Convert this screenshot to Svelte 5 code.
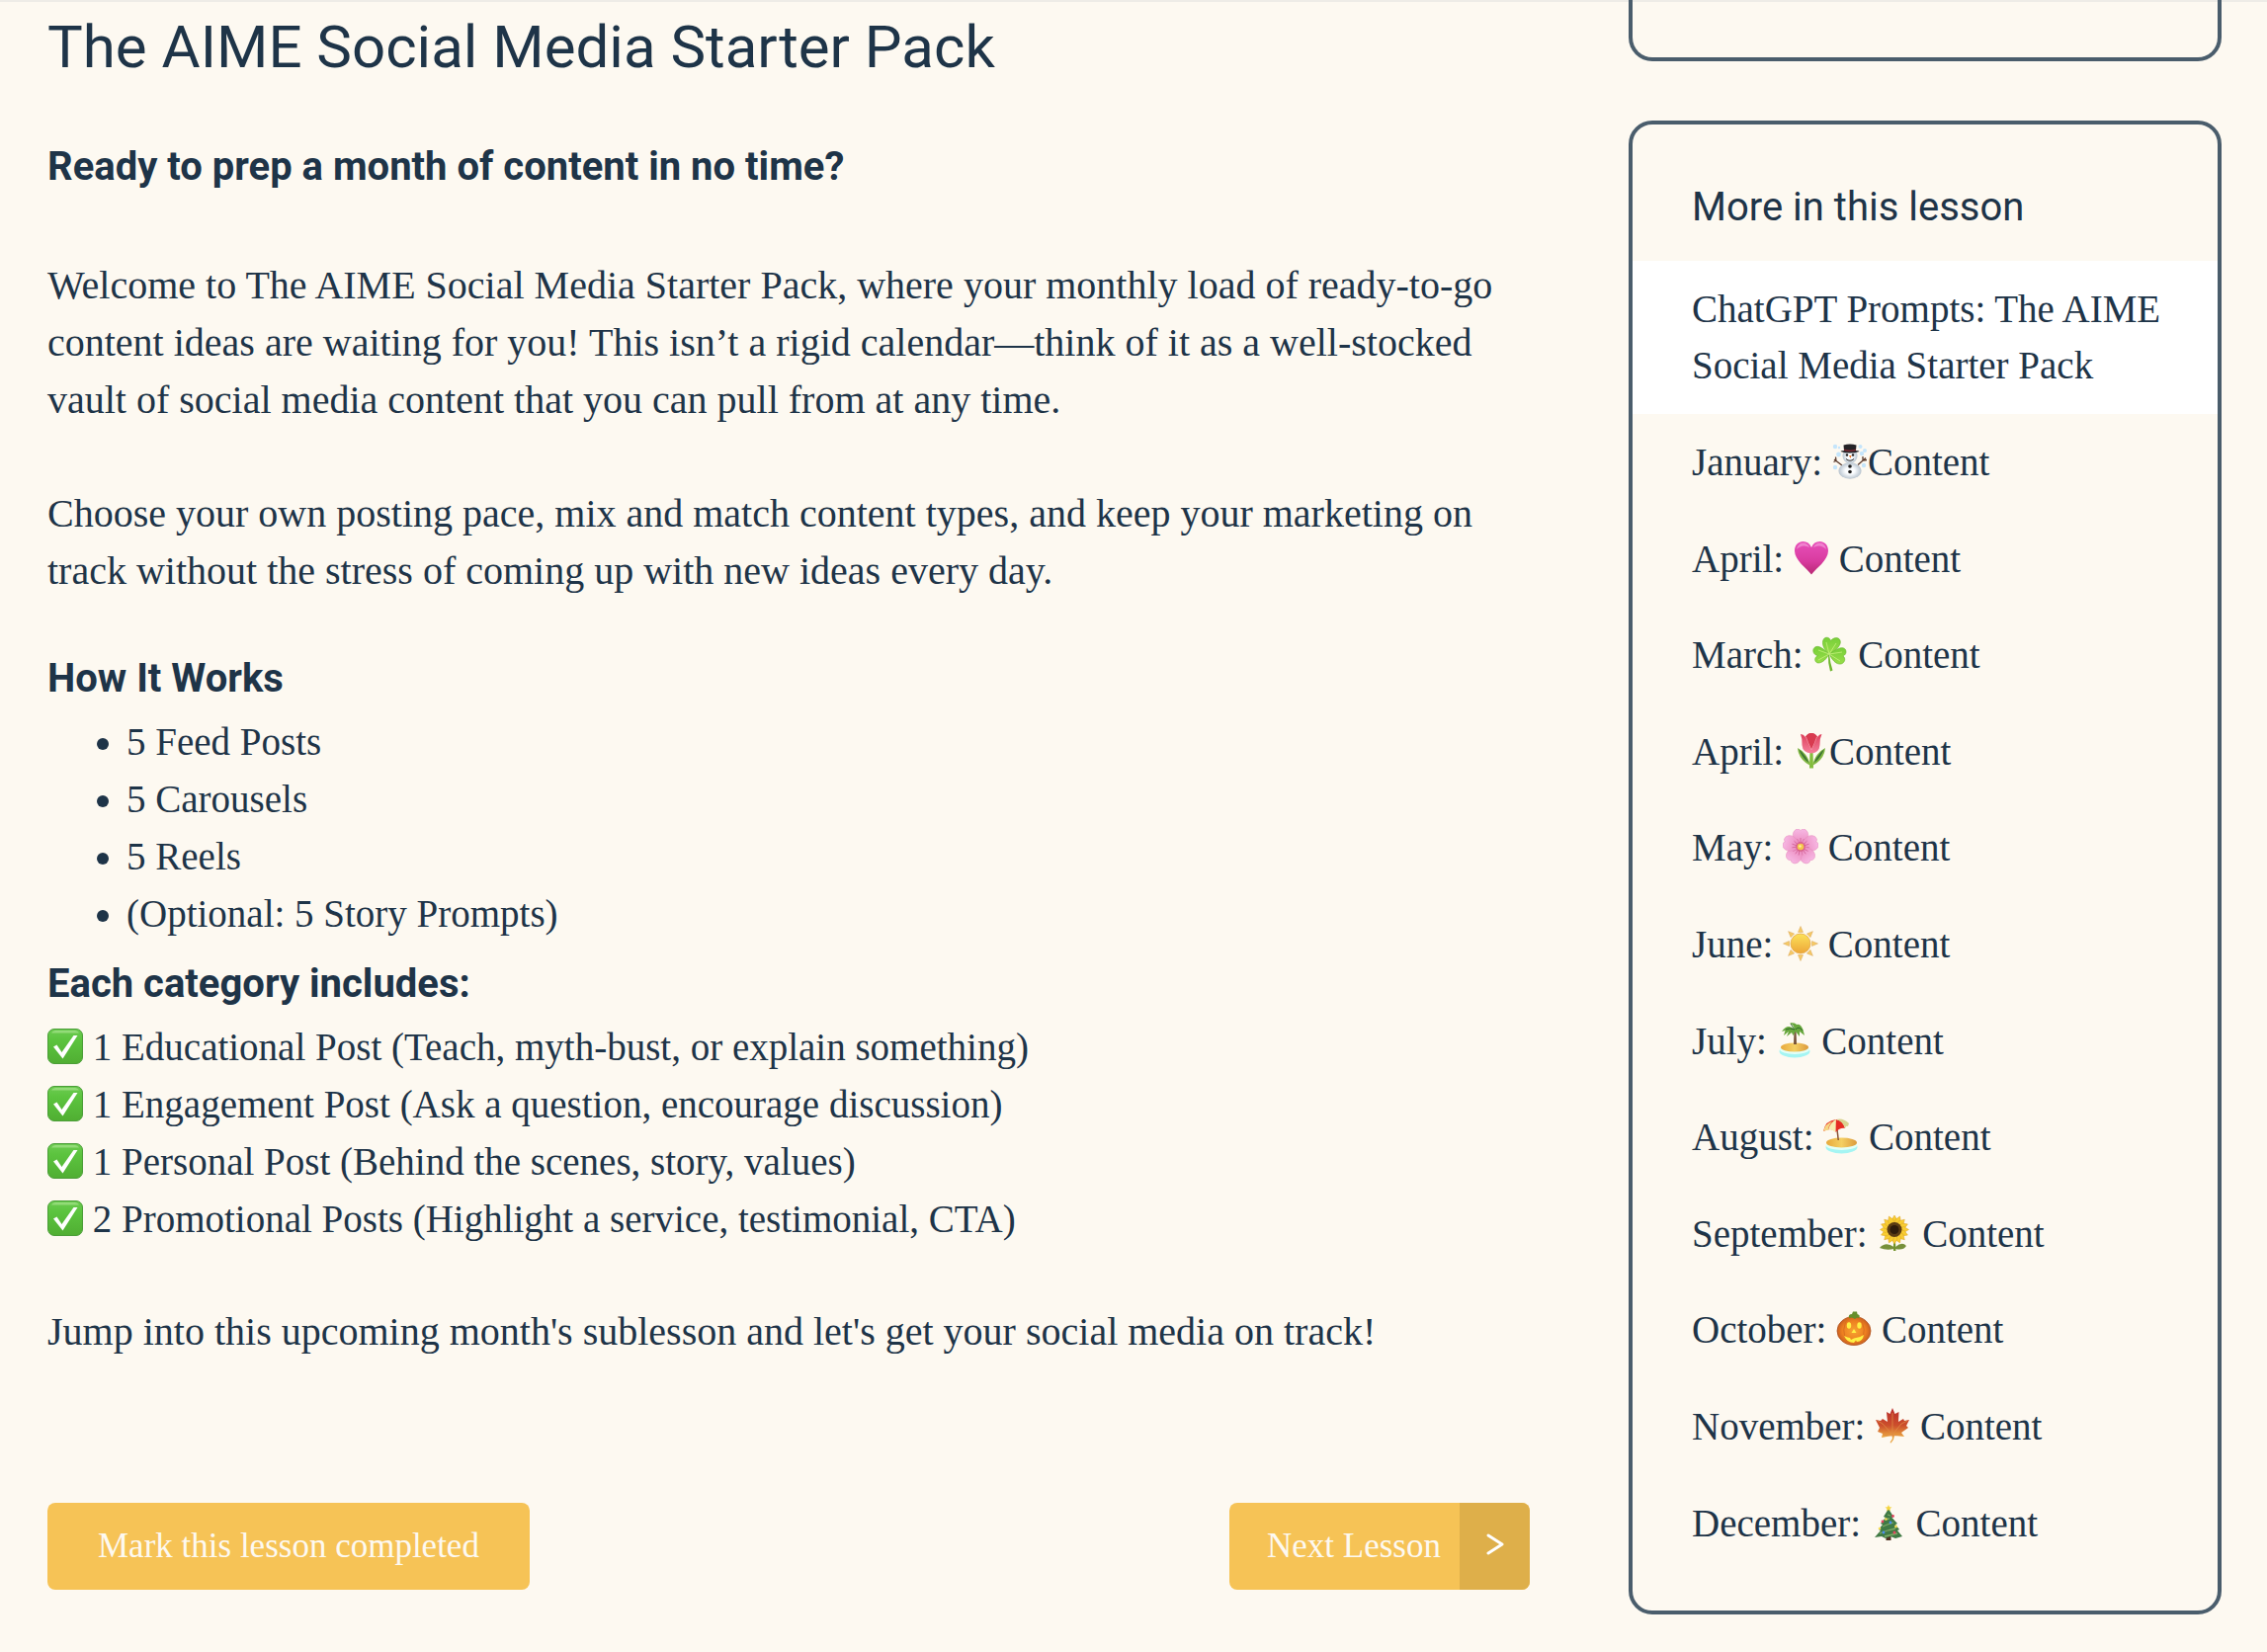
<script lang="ts">
	type Lesson = {
		month: string;
		icon: string;
		tight?: boolean;
	};

	const included = [
		'1 Educational Post (Teach, myth-bust, or explain something)',
		'1 Engagement Post (Ask a question, encourage discussion)',
		'1 Personal Post (Behind the scenes, story, values)',
		'2 Promotional Posts (Highlight a service, testimonial, CTA)'
	];

	const formats = ['5 Feed Posts', '5 Carousels', '5 Reels', '(Optional: 5 Story Prompts)'];

	const lessons: Lesson[] = [
		{ month: 'January', icon: 'snowman', tight: true },
		{ month: 'April', icon: 'heart' },
		{ month: 'March', icon: 'shamrock' },
		{ month: 'April', icon: 'tulip', tight: true },
		{ month: 'May', icon: 'blossom' },
		{ month: 'June', icon: 'sun' },
		{ month: 'July', icon: 'island' },
		{ month: 'August', icon: 'beach' },
		{ month: 'September', icon: 'sunflower' },
		{ month: 'October', icon: 'pumpkin' },
		{ month: 'November', icon: 'maple' },
		{ month: 'December', icon: 'tree' }
	];

	function spokes(count: number) {
		return Array.from({ length: count }, (_, i) => (i * 360) / count);
	}
</script>

<svelte:head>
	<title>The AIME Social Media Starter Pack</title>
</svelte:head>

{#snippet emoji(name: string)}
	<svg class="emoji" viewBox="0 0 36 36" role="img" aria-label={name}>
		{#if name === 'check'}
			<rect x="0.5" y="0.5" width="35" height="35" rx="6.5" fill="url(#green)" stroke="#4b9d38" />
			<path d="M4 4.5Q5 2 8 2H28Q31 2 32 4.5Z" fill="#a5e38c" opacity="0.7" />
			<path d="M6 18.5L9.5 16.5L14.5 24L26.5 7H30.5L15.5 30.5Z" fill="#fff" />
		{:else if name === 'snowman'}
			<g fill="#c5e5fb">
				<circle cx="3" cy="3" r="2.2" /><circle cx="28.5" cy="3" r="2" /><circle cx="33" cy="7" r="2" />
				<circle cx="6.5" cy="11" r="2.4" /><circle cx="30" cy="10" r="2.2" />
				<circle cx="3" cy="24" r="2.2" /><circle cx="32" cy="22" r="2.2" /><circle cx="7" cy="4" r="1.2" />
			</g>
			<path d="M10 22L2 16M4 17.5L1.5 18.5M4 17.5L3.5 13.5M26 21.5L34 14.5M31 17L31 13M31 17L35 16.5" stroke="#5a3a2c" stroke-width="1.3" fill="none" />
			<ellipse cx="18" cy="27.5" rx="11.5" ry="8.3" fill="url(#snow)" />
			<circle cx="18" cy="12.5" r="7.5" fill="url(#snow)" />
			<path d="M11.5 1.5Q18 -0.5 24.5 1.5L24 7Q27 7 27.5 8Q18 11 8.5 8Q9 7 12 7Z" fill="#252327" />
			<path d="M12 5.5Q18 7.5 24 5.5V7Q18 9 12 7Z" fill="#7c2930" />
			<g fill="#1c1c1c">
				<circle cx="15" cy="11.5" r="1.2" /><circle cx="21" cy="11.5" r="1.2" />
				<circle cx="18" cy="23" r="1.8" /><circle cx="18" cy="28.5" r="1.8" />
			</g>
			<path d="M14 15.5Q18 19 22 15.5" stroke="#333" fill="none" />
			<path d="M17 12L19.5 12L18.5 15Z" fill="#ed7728" />
		{:else if name === 'heart'}
			<path d="M18 34.5C13 28 1 20 1 10.5C1 4.5 5 1 9.5 1C13.5 1 16.5 3 18 7C19.5 3 22.5 1 26.5 1C31 1 35 4.5 35 10.5C35 20 23 28 18 34.5Z" fill="url(#pink)" />
			<path d="M3 9Q4 3 9.5 2.5Q14 2.5 16 7Q9 3 3 9ZM20 7Q22 2.5 26.5 2.5Q32 3 33 9Q27 3 20 7Z" fill="#f7a6df" opacity="0.6" />
		{:else if name === 'shamrock'}
			<path d="M17 18Q18 27 20.5 34.5L18 35.5Q15.5 27 16 18Z" fill="#6fb52e" />
			<g fill="url(#leaf)" stroke="#67b32c" stroke-width="0.6">
				<path d="M17 18C10 13 8.5 3.5 13 1.5C16 0.5 18 2.5 18.5 4.5C21 1.5 26 0 28 4C30 9 23 15 17 18Z" />
				<path d="M16.5 18.5C13 26 5 29.5 3 25C2 22.5 3.5 20.5 5.5 19.5C1 19 -0.5 14 2 11.5C6 8 12 13 16.5 18.5Z" />
				<path d="M17.5 18C24 12.5 31 9.5 33.5 13.5C35 17 33 19 31 20C34 22 33 27 29 28C24 29 19 23 17.5 18Z" />
			</g>
			<path d="M17 18L14 6M17 18L24 7M17 18L6 14M17 18L6 24M17 18L30 16M17 18L28 25" stroke="#c6f07c" stroke-width="0.8" />
		{:else if name === 'tulip'}
			<path d="M16.5 18H19.5L20 35.5H16Z" fill="#83bd3c" />
			<path d="M17 33Q14 20 4 15Q5 27 17 33ZM19 33Q22 20 32 15Q31 27 19 33Z" fill="#83b845" />
			<path d="M15.5 30Q12 22 5 16Q9 26 15.5 30ZM20.5 30Q24 22 31 16Q27 26 20.5 30Z" fill="#3f7634" />
			<path d="M7 1Q10 1 12 4Q14 0 18 0Q22 0 24 4Q26 1 28.5 1Q26 6 26.5 12Q26 20 18 20.5Q9 20 8.5 12Q9 6 7 1Z" fill="url(#petal)" />
			<path d="M12 4Q14 0 18 0Q22 0 24 4Q22 11 18 17Q14 11 12 4Z" fill="#d83b50" />
			<path d="M18 17Q22 9 23.5 4M18 17Q14 9 12.5 4" stroke="#f79aac" fill="none" stroke-width="0.8" />
		{:else if name === 'blossom'}
			{#each spokes(5) as turn}
				<g transform="rotate({turn} 18 18)">
					<path d="M18 18C11 13 9 7 11 3Q12.5 0 15.5 0Q17 0 18 1.5Q19 0 20.5 0Q23.5 0 25 3C27 7 25 13 18 18Z" fill="url(#rose)" stroke="#e58bbd" stroke-width="0.5" />
					<path d="M18 17V9M17 15L14.5 10M19 15L21.5 10" stroke="#c84f85" stroke-width="0.6" />
				</g>
			{/each}
			<circle cx="18" cy="18" r="5" fill="#d55b82" opacity="0.7" />
			<circle cx="18" cy="18" r="3.3" fill="#f5c64b" />
			<circle cx="17.5" cy="17.5" r="1.3" fill="#fff0a0" />
		{:else if name === 'sun'}
			{#each spokes(8) as turn}
				<path d="M18 0.5L20.5 6.5H15.5Z" fill="#f6c963" stroke="#d9a65b" stroke-width="0.5" transform="rotate({turn} 18 18)" />
			{/each}
			<circle cx="18" cy="18" r="10" fill="url(#gold)" stroke="#e2a035" stroke-width="0.7" />
		{:else if name === 'island'}
			<ellipse cx="18" cy="29" rx="15.5" ry="6.5" fill="#a5f5f3" />
			<ellipse cx="18" cy="27" rx="15" ry="5" fill="#e4fff7" />
			<ellipse cx="18" cy="25" rx="14" ry="4.5" fill="url(#sand)" />
			<path d="M17.5 8H19.5L20 22H17Z" fill="#765239" />
			<path d="M18 7Q11 0 5 9L8.5 8L7 13L12 9L10 14L15 10L16.5 13L19 9L23 14L23 9L28 13L26.5 7Q24 1 20 2Q19 0 13 0Q17 2 18 7Z" fill="#68a83e" />
			<path d="M18 7Q13 5 9 7M19 7Q22 3 26 8M18 7Q15 3 14 1" stroke="#2e6929" fill="none" />
		{:else if name === 'beach'}
			<ellipse cx="18.5" cy="29" rx="16" ry="6.5" fill="#a5f5f3" />
			<ellipse cx="18.5" cy="27" rx="16" ry="5" fill="#e4fff7" />
			<ellipse cx="18.5" cy="24.5" rx="15.5" ry="5" fill="url(#sand)" />
			<path d="M13 9L14.5 22H16L14.5 9Z" fill="#8a5537" />
			<path d="M0 13Q2 2 13 1L12 13Q8 9 0 13Z" fill="#e93725" />
			<path d="M0 13Q2 5 9 3Q5 8 5 12Q2 11.5 0 13Z" fill="#f6d783" />
			<path d="M5 11.5Q7 4 13 1L12.5 14Q9 10.5 5 11.5Z" fill="#f8edaf" />
			<path d="M13 1Q20 2 22 10Q17 9 12.5 14Z" fill="#e52c22" />
			<path d="M13 1Q20 -1 26 5L25 8Q23 7 22 10Q20 3 13 1Z" fill="#d9d391" />
		{:else if name === 'sunflower'}
			<path d="M17 27H19L19.5 36H17Z" fill="#73942c" />
			<path d="M17.5 32Q9 26 3 33Q10 36 17.5 34ZM19 32Q26 26 30 31Q27 36 19 34Z" fill="#76903a" />
			{#each spokes(16) as turn}
				<path d="M18 14L15 5L18 0L21 5Z" fill="#f8cd31" stroke="#dca42a" stroke-width="0.5" transform="rotate({turn} 18 14.5)" />
			{/each}
			<circle cx="18" cy="14.5" r="7.5" fill="#5b3c13" />
			<circle cx="18" cy="14.5" r="4.5" fill="#2e1c0b" />
		{:else if name === 'pumpkin'}
			<ellipse cx="18" cy="20" rx="17" ry="14.5" fill="url(#orange)" stroke="#ae5421" stroke-width="0.8" />
			<path d="M13 6Q3 18 12 33M23 6Q33 18 24 33" stroke="#d96f1f" fill="none" />
			<path d="M13 7Q12 3 16 3L17 0.5H21L21.5 3Q25 4 23 7Q21 5.5 19 8Q16 5.5 13 7Z" fill="#658e2b" />
			<g fill="#fff044">
				<ellipse cx="13" cy="14.5" rx="2.2" ry="3.3" /><ellipse cx="23.5" cy="14.5" rx="2.2" ry="3.3" />
				<path d="M18 18L20.5 22H15.5Z" />
				<path d="M8 25Q12 27 14 27L15 29L18 27.5Q24 27 28 24Q27 31 21 31L20 29.5L18 32Q11 32 8 25Z" />
			</g>
		{:else if name === 'maple'}
			<path d="M18 0L20.5 6L24.5 4L24 14L29 11L30 13L35 12L32 18L34 20L27 25L30 29L20 28L19 32L16.5 35.5L15.5 35L18 31L17.5 28L7 30L8 26L3 24L5 20L1 12L6 13L8 11L13 14L12 4L15.5 6Z" fill="url(#autumn)" />
			<path d="M18 28L18 5M18 27L27 16L33 13M18 27L8 16L3 13M18 28L9 27M18 28L28 27" stroke="#e08a45" stroke-width="0.8" fill="none" />
		{:else if name === 'tree'}
			<rect x="15.5" y="29" width="5" height="7" fill="#503020" />
			<path d="M18 4L23 12L21.5 13L27 19L25 20L29 25L27 26L32 32L25 34L20 32L15 34L11 32L4 33L10 26L8 25L12 20L10 19L15 13L13 12Z" fill="#407a45" />
			<path d="M14 15L19 14M12 22L17 20L23 18M9 29L17 26L25 24M14 32L27 29M17 10L20 11" stroke="#83ad68" stroke-width="1.3" />
			<path d="M18 0L19 2.2L21.5 2.5L19.5 4L20 6.5L18 5L16 6.5L16.5 4L14.5 2.5L17 2.2Z" fill="#f4d540" />
			<g fill="#e24561"><circle cx="22.5" cy="11.5" r="1.4" /><circle cx="12" cy="17" r="1.4" /><circle cx="24" cy="28" r="1.5" /></g>
			<g fill="#f6dc55"><circle cx="15.5" cy="14.5" r="1.3" /><circle cx="25.5" cy="22" r="1.4" /><circle cx="9" cy="24" r="1.3" /></g>
			<g fill="#4b8ff0"><circle cx="20" cy="18" r="1.4" /><circle cx="13" cy="28" r="1.4" /></g>
		{/if}
	</svg>
{/snippet}

<svg class="defs" width="0" height="0" aria-hidden="true">
	<defs>
		<linearGradient id="green" x2="0" y2="1"><stop stop-color="#6ccb51" /><stop offset="0.3" stop-color="#5cc43f" /><stop offset="1" stop-color="#50ae32" /></linearGradient>
		<radialGradient id="snow"><stop offset="0.4" stop-color="#fbfdff" /><stop offset="1" stop-color="#b8c4cf" /></radialGradient>
		<linearGradient id="pink" x2="0" y2="1"><stop stop-color="#e74fb9" /><stop offset="0.6" stop-color="#d83b9f" /><stop offset="1" stop-color="#b82873" /></linearGradient>
		<linearGradient id="leaf" x2="0" y2="1"><stop stop-color="#77cf38" /><stop offset="1" stop-color="#98dd49" /></linearGradient>
		<linearGradient id="petal" x2="0" y2="1"><stop stop-color="#dc3c58" /><stop offset="1" stop-color="#f4809b" /></linearGradient>
		<linearGradient id="rose" x2="0" y2="1"><stop stop-color="#f7b8e4" /><stop offset="1" stop-color="#e984b8" /></linearGradient>
		<linearGradient id="gold" x2="0" y2="1"><stop stop-color="#fce25a" /><stop offset="1" stop-color="#eda638" /></linearGradient>
		<linearGradient id="sand"><stop stop-color="#e8a93c" /><stop offset="0.5" stop-color="#f4cf63" /><stop offset="1" stop-color="#dc9a3c" /></linearGradient>
		<radialGradient id="orange"><stop stop-color="#f7a331" /><stop offset="0.7" stop-color="#ed7f20" /><stop offset="1" stop-color="#cb6020" /></radialGradient>
		<linearGradient id="autumn" x2="0" y2="1"><stop stop-color="#b92b2b" /><stop offset="0.5" stop-color="#cc4f2c" /><stop offset="0.8" stop-color="#e9a13e" /></linearGradient>
	</defs>
</svg>

<div class="page">
	<main>
		<h1>The AIME Social Media Starter Pack</h1>
		<h2 class="intro">Ready to prep a month of content in no time?</h2>

		<p>
			Welcome to The AIME Social Media Starter Pack, where your monthly load of ready-to-go content
			ideas are waiting for you! This isn’t a rigid calendar—think of it as a well-stocked vault of
			social media content that you can pull from at any time.
		</p>
		<p>
			Choose your own posting pace, mix and match content types, and keep your marketing on track
			without the stress of coming up with new ideas every day.
		</p>

		<h2>How It Works</h2>
		<ul class="formats">
			{#each formats as format}
				<li>{format}</li>
			{/each}
		</ul>

		<h2>Each category includes:</h2>
		<ul class="included">
			{#each included as item}
				<li>{@render emoji('check')} {item}</li>
			{/each}
		</ul>

		<p>Jump into this upcoming month's sublesson and let's get your social media on track!</p>

		<div class="actions">
			<button type="button" class="complete">Mark this lesson completed</button>
			<a href="#next" class="next">
				<span class="next-label">Next Lesson</span>
				<span class="next-arrow">
					<svg viewBox="0 0 18 22" aria-hidden="true"><path d="M2 2L16 11L2 20" /></svg>
				</span>
			</a>
		</div>
	</main>

	<aside>
		<div class="card previous"></div>
		<nav class="card" aria-labelledby="more-heading">
			<h3 id="more-heading">More in this lesson</h3>
			<ul class="lessons">
				<li class="current">
					<a href="#starter-pack" aria-current="page">ChatGPT Prompts: The AIME Social Media Starter Pack</a>
				</li>
				{#each lessons as lesson}
					<li>
						<a href="#{lesson.icon}">{lesson.month}: {@render emoji(lesson.icon)}{lesson.tight ? '' : ' '}Content</a>
					</li>
				{/each}
			</ul>
		</nav>
	</aside>
</div>

<style>
	:global(body) {
		background: #fdf9f1;
		color: #1e3448;
		font-family: 'Liberation Serif', 'Times New Roman', serif;
		font-size: 40px;
		line-height: 58px;
	}

	.defs {
		position: absolute;
	}

	.page {
		display: grid;
		grid-template-columns: minmax(0, 5fr) minmax(0, 2fr);
		column-gap: 100px;
		box-sizing: border-box;
		min-height: 100vh;
		padding: 0 46px 38px 48px;
		box-shadow: inset 0 2px #eeece7;
	}

	h1,
	h2,
	h3,
	p,
	ul {
		margin: 0;
		padding: 0;
	}

	h1,
	h2,
	h3 {
		font-family: Roboto, sans-serif;
		font-weight: 400;
	}

	h1 {
		padding-top: 12px;
		font-size: 60px;
		line-height: 72px;
	}

	h2 {
		margin: 13px 0 6px;
		font-size: 40px;
		font-weight: 700;
	}

	.intro {
		margin: 56px 0 62px;
	}

	p + p {
		margin-top: 57px;
	}

	p + h2 {
		margin-top: 51px;
	}

	ul {
		font-size: 39px;
	}

	.formats {
		padding-left: 80px;
	}

	.included {
		margin-bottom: 56px;
		list-style: none;
	}

	.emoji {
		width: 36px;
		height: 36px;
		vertical-align: -4px;
	}

	.actions {
		display: flex;
		justify-content: space-between;
		margin-top: 144px;
	}

	.complete,
	.next {
		border: 0;
		border-radius: 8px;
		background: #f6c356;
		color: #fdf9f1;
		font-family: inherit;
		font-size: 35px;
		line-height: 88px;
	}

	.complete {
		padding: 0 51px;
		cursor: pointer;
	}

	.next {
		display: flex;
		overflow: hidden;
		text-decoration: none;
	}

	.next-label {
		padding: 0 19px 0 38px;
	}

	.next-arrow {
		display: flex;
		align-items: center;
		justify-content: center;
		width: 71px;
		background: #deaf4a;
	}

	.next-arrow svg {
		width: 18px;
		height: 22px;
		margin-bottom: 4px;
		fill: none;
		stroke: #fff;
		stroke-width: 3;
		stroke-linecap: round;
		stroke-linejoin: round;
	}

	aside {
		display: flex;
		flex-direction: column;
		gap: 60px;
	}

	.card {
		display: flex;
		flex: 1;
		flex-direction: column;
		padding: 55px 0 40px;
		border: 4px solid #4a5d6c;
		border-radius: 24px;
	}

	.previous {
		flex: none;
		padding: 29px 0;
		border-top: 0;
		border-radius: 0 0 24px 24px;
	}

	h3 {
		margin: 0 60px 25px;
		font-size: 40px;
	}

	.lessons {
		display: flex;
		flex: 1;
		flex-direction: column;
		list-style: none;
		line-height: 57px;
	}

	.lessons li {
		display: flex;
		flex: 1 0 auto;
		align-items: center;
		padding: 20px 50px 20px 60px;
	}

	.lessons a {
		color: inherit;
		text-decoration: none;
	}

	.current {
		background: #fff;
	}
</style>
